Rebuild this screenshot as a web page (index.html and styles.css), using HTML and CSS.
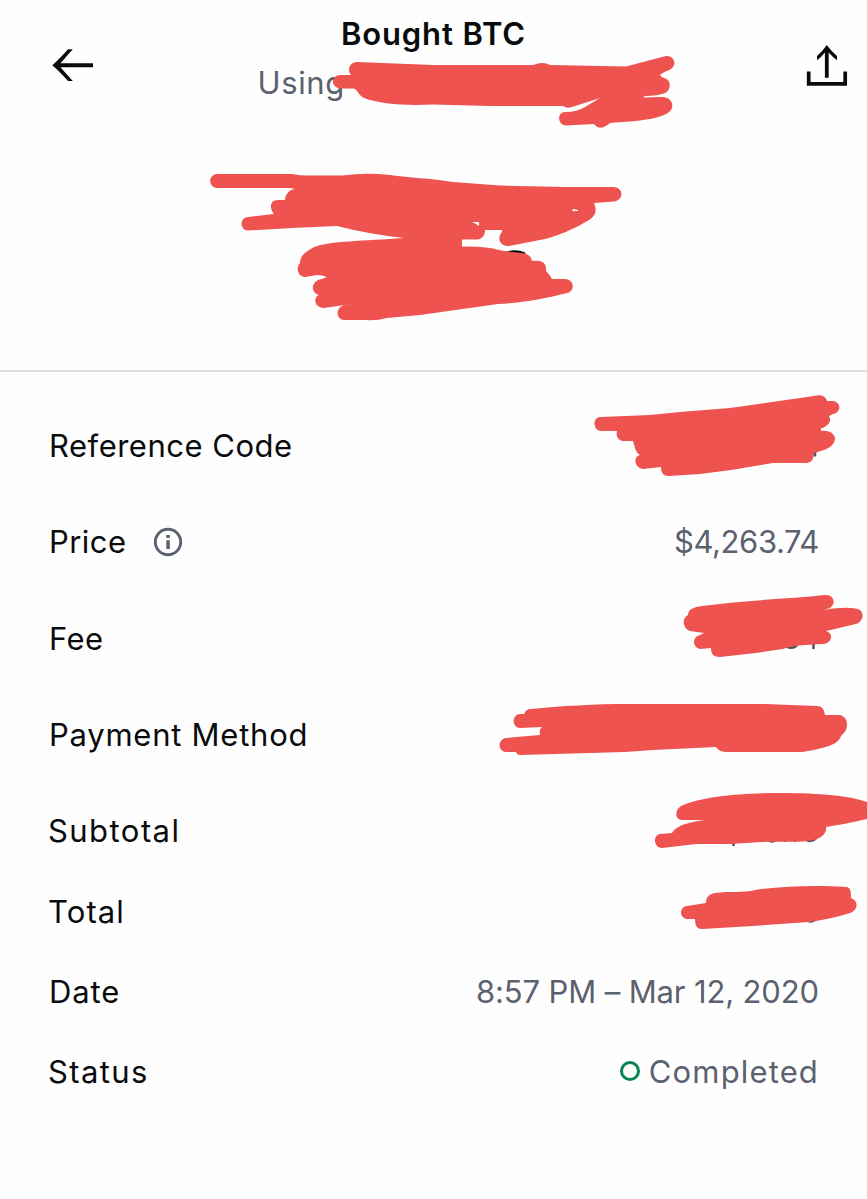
FILE: index.html
```html
<!DOCTYPE html>
<html lang="en">
<head>
<meta charset="utf-8">
<title>Bought BTC</title>
<link rel="stylesheet" href="styles.css">
</head>
<body>
<main class="screen">
  <header class="header">
    <svg class="back" width="42" height="34" viewBox="0 0 42 34" fill="#0a0b0d"><path d="M16 1.300H20.800Q14 9 8.500 15.300H41V19.200H8.500Q14 25.500 20.800 33H16Q7 23 .3 17.300Q7 11.500 16 1.300Z"/></svg>
    <div class="heading">
      <h1 class="title">Bought BTC</h1>
      <p class="subtitle">Using</p>
    </div>
    <svg class="share" width="42" height="42" viewBox="0 0 42 42"><path fill="#0a0b0d" d="M20.800 0Q26 7 31 11V15.300Q26.500 12 22.700 7.500V32.700H18.900V7.500Q15.500 12 11 15.300V11Q16 7 20.800 0Z"/><path fill="none" stroke="#0a0b0d" stroke-width="3.700" d="M2.700 26.600V38.900H39.200V26.600"/></svg>
  </header>
  <section class="details">
    <div class="row"><span class="label ref">Reference Code</span></div>
    <div class="row"><span class="label price">Price</span>
      <svg class="info" width="30" height="30" viewBox="0 0 30 30"><circle cx="15" cy="15" r="12.700" fill="none" stroke="#5b616e" stroke-width="2.900"/><path d="M13.300 8h3.500v3.100h-3.500zM13.300 13.300h3.500v8.600h-3.500z" fill="#5b616e"/></svg>
      <span class="value amount">$4,263.74</span></div>
    <div class="row"><span class="label fee">Fee</span></div>
    <div class="row"><span class="label method">Payment Method</span></div>
    <div class="row short first"><span class="label subtotal">Subtotal</span></div>
    <div class="row short"><span class="label total">Total</span></div>
    <div class="row short"><span class="label date">Date</span><span class="value when">8:57 PM – Mar 12, 2020</span></div>
    <div class="row short"><span class="label status">Status</span><span class="value state"><i class="dot"></i><span class="done">Completed</span></span></div>
  </section>
  <svg class="marks" width="867" height="1199" viewBox="0 0 867 1199">
    <g fill="none" stroke="#4c505a" stroke-width="2.500">
      <path d="M507 253Q516 250 525 254" stroke="#0a0b0d" stroke-width="3"/>
      <path d="M815 452V456.500M785 645.500Q791 650 797 645.500M813.500 643V649M733.500 842V846M768 840Q772 843 776 840M785 839V842M795 839V842M804 839Q810 843 816 838.500M806 920Q811 923 816 919.500"/>
    </g>
    <g fill="#ee534f">
      <path d="M357 62L433 65H533Q543 61 550 65L626 66.500L664 56.500C672 54 677 62 673 67C670 71 664 71 660 75Q661 77 664 78C672 80 671 90 665 93Q658 96 645 96L643 97.500L661 97C670 96 675 104 671 110C665 119 638 121 610 123Q600 132 594 124L566 125.500C557 125 557 112 565 112Q577 112 585 107L600 98L572 107Q567 109 563 106H490L433 104.500C405 106 380 104 364 98C358 95 358 90 354 88.500H341C331 88 330 76 340 75H351C347 71 349 62 357 62Z"/>
      <path d="M217 174H292Q302 176 312 175.500H342Q366 172.500 390 175C410 178 430 178 453 182L500 185.500L565 187H613C624 187 624 200 614 201.500L594 203C597 210 596 216 589 220C572 230 560 235 545 239L509 246C499 247 497 237 502 232V230H485C485 236 482 239 477 239.500H462V246.500Q487 246 499 250Q509 252 522 253Q531 254 532 261C541 260 547 262 546 271Q550 275 552 279H565C575 280 575 291 567 293C545 299 520 303 498 304L420 315L387 318Q375 321 367 320H345C335 320 335 306 346 305L352 304L324 308C314 308 313 297 319 295C309 292 312 280 322 279L327 277Q322 275 317 275L305 277C297 276 296 267 300 263C300 254 308 251 314 247C330 241 363 241 404 238Q368 234 337 226L292 228L248 230.500C240 230 239 218 248 217L274 214C269 208 270 200 278 200H285Q286 190 295 189L290 188H217C208 187 208 175 217 174Z"/>
      <path d="M600 417L650 415L680 412L730 408L765 403L814 396C822 394 826 397 827 401H833C841 402 842 412 833 414L829 416Q833 423 823 428H821V431C831 430 835 435 835 439C834 448 824 450 814 453C813 461 811 463 805 463H773L731 470L700 474L669 476C662 476 661 471 661 467L643 469C634 468 633 456 640 455C635 452 635 447 633 441H623C617 440 616 435 617 431H601C593 430 592 418 600 417Z"/>
      <path d="M702 606C745 600 788 599 825 595C833 594 837 603 830 608L824 610C840 607 854 607 860 610C865 615 862 622 856 624L826 631C834 633 832 643 824 644C805 645 792 645 783 649L756 653L720 657C712 657 711 652 711 648L700 649C692 647 692 637 700 635L704 633L690 631C682 628 682 618 688 615C688 609 694 607 702 606Z"/>
      <path d="M531 709C560 706 595 704 630 704H765L817 706Q824 706 825 715H840C848 717 849 727 844 733Q841 735 840 738C837 745 822 749 802 752H727Q719 752 716 747L653 750L625 752L520 755Q517 755 516 752H506C497 751 498 739 506 738L540 735Q539 729 542 727L520 728C512 728 511 715 520 714H524Q526 709 531 709Z"/>
      <path d="M681 806C703 796 742 793 781 793C820 793 851 796 867 802V819C855 822 838 825 826 827C827 834 821 838 814 840C799 843 780 841 762 842L730 844H696L662 848C653 847 653 835 660 834L672 833C676 825 690 822 705 820H682C674 819 675 810 681 806Z"/>
      <path d="M715 893C730 891 744 893 755 890C783 886 817 885 846 887C851 887 851 893 851 898C859 901 858 910 850 913C838 917 824 920 809 922L753 926L702 929C696 929 695 924 695 919H687C679 918 679 907 687 906L706 903C706 897 709 894 715 893Z"/>
    </g>
    <g fill="#fff"><path d="M472 222H479V226L476 224Z"/><path d="M572 211L573 209L578 210V211Z"/></g>
  </svg>
</main>
</body>
</html>
```
FILE: styles.css
```css
body { margin: 0; background: #fff; }
.screen {
  position: relative;
  width: 867px;
  height: 1199px;
  overflow: hidden;
  background: #fefefe;
  color: #0a0b0d;
  font-family: Inter, "Liberation Sans", sans-serif;
  font-size: 31px;
}
.header {
  display: flex;
  justify-content: space-between;
  height: 370px;
  padding: 0 19px 0 52px;
  border-bottom: 2px solid #dddfe2;
}
.back { margin-top: 48px; }
.share { margin-top: 45px; }
.heading { width: 350px; margin-right: 33px; }
.title {
  margin: 14px 0 0;
  font-size: 31px;
  font-weight: 600;
  line-height: 40px;
  text-align: center;
  letter-spacing: .85px;
}
.subtitle {
  margin: 9px 0 0 -1px;
  color: #5b616e;
  line-height: 40px;
  letter-spacing: .6px;
}
.details { padding: 26px 49px 0; }
.row { display: flex; align-items: center; height: 96.300px; }
.row.short { height: 80.300px; }
.row.first { margin-top: 8px; }
.label, .value { white-space: nowrap; line-height: 40px; }
.value { margin-left: auto; color: #5b616e; }
.ref { letter-spacing: .5px; }
.price { letter-spacing: .45px; }
.fee { letter-spacing: .4px; }
.method { letter-spacing: .75px; }
.subtotal { margin-left: -1px; letter-spacing: 1.45px; }
.total { margin-left: -1px; letter-spacing: 1.1px; }
.date { letter-spacing: .9px; }
.status { margin-left: -1px; letter-spacing: 1.4px; }
.amount { margin-right: -1px; letter-spacing: -.4px; }
.when { margin-right: -1px; letter-spacing: -.13px; }
.done { margin-right: -1px; letter-spacing: 1.15px; }
.info { margin-left: 26px; }
.state { display: flex; align-items: center; gap: 9px; }
.dot {
  box-sizing: border-box;
  width: 20px;
  height: 20px;
  margin-top: -2px;
  border: 3px solid #098551;
  border-radius: 50%;
}
.marks { position: absolute; inset: 0; pointer-events: none; }
```
